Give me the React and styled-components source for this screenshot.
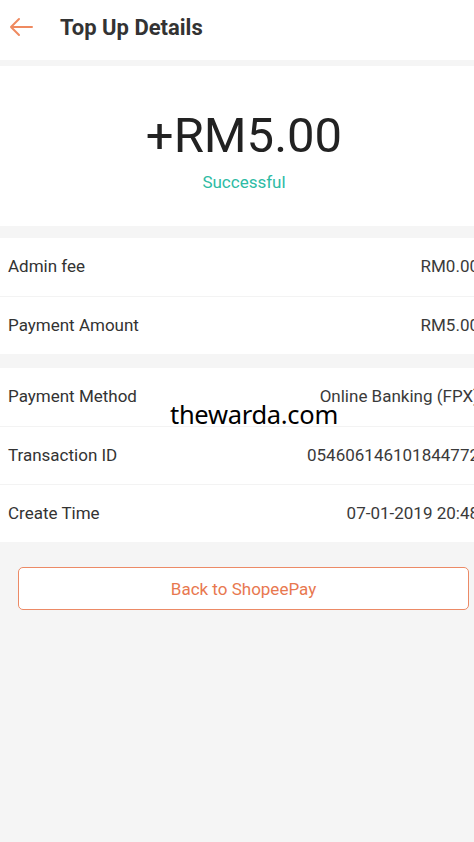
import React from 'react';
import styled, { createGlobalStyle } from 'styled-components';

const GlobalStyle = createGlobalStyle`
  html, body { margin: 0; padding: 0; }
  body { font-family: Roboto, "Liberation Sans", Arial, sans-serif; background: #f5f5f5; }
`;

const Page = styled.div`
  width: 100%;
  min-height: 100vh;
  background: #f5f5f5;
  overflow: hidden;
  position: relative;
  display: flex;
  flex-direction: column;
`;

const Header = styled.div`
  height: 60px;
  background: #fff;
  display: flex;
  align-items: center;
  padding-left: 8px;
  margin-bottom: 6px;
`;

const BackIcon = styled.svg`
  width: 26px;
  height: 20px;
  margin-right: 26px;
  margin-top: -6px;
`;

const Title = styled.div`
  font-size: 22px;
  font-weight: 700;
  color: #333;
  margin-top: -6px;
`;

const AmountCard = styled.div`
  height: 160px;
  background: #fff;
  display: flex;
  flex-direction: column;
  align-items: center;
  padding: 42px 0 0 14px;
  box-sizing: border-box;
  margin-bottom: 12px;
`;

const Amount = styled.div`
  font-size: 49px;
  color: #222;
  line-height: 56px;
`;

const Status = styled.div`
  font-size: 17px;
  color: #2dbba4;
  margin-top: 8px;
`;

const Section = styled.div`
  background: #fff;
  margin-bottom: ${p => p.gap || 0}px;
`;

const Row = styled.div`
  height: 58px;
  display: flex;
  align-items: center;
  justify-content: space-between;
  padding-left: 8px;
  margin-right: -5px;
  border-top: ${p => (p.first ? 'none' : '1px solid #f3f3f3')};
  box-sizing: border-box;
`;

const Label = styled.span`
  font-size: 17px;
  color: #333;
  margin-top: -2px;
`;

const Value = styled.span`
  font-size: 17px;
  color: #3a3a3a;
  white-space: nowrap;
  margin-top: -2px;
`;

const Button = styled.button`
  margin: 25px 5px 0 18px;
  height: 43px;
  border: 1.5px solid #ec8a66;
  border-radius: 5px;
  background: #fff;
  color: #e8784f;
  font-family: Roboto, "Liberation Sans", Arial, sans-serif;
  font-size: 17px;
`;

const Watermark = styled.div`
  position: absolute;
  left: 170px;
  top: 397px;
  font-family: "Noto Sans", "Open Sans", sans-serif;
  font-size: 25.5px;
  color: #000;
  letter-spacing: -0.3px;
`;

const rowsA = [
  ['Admin fee', 'RM0.00'],
  ['Payment Amount', 'RM5.00'],
];

const rowsB = [
  ['Payment Method', 'Online Banking (FPX)'],
  ['Transaction ID', '054606146101844772'],
  ['Create Time', '07-01-2019 20:48'],
];

function App() {
  return (
    <Page>
      <GlobalStyle />
      <Header>
        <BackIcon viewBox="0 0 26 20">
          <path d="M24 10H3M11 2L3 10l8 8" fill="none" stroke="#ef8a60" strokeWidth="2" strokeLinecap="round" strokeLinejoin="round" />
        </BackIcon>
        <Title>Top Up Details</Title>
      </Header>
      <AmountCard>
        <Amount>+RM5.00</Amount>
        <Status>Successful</Status>
      </AmountCard>
      <Section gap={14}>
        {rowsA.map(([l, v], i) => (
          <Row key={l} first={i === 0}>
            <Label>{l}</Label>
            <Value>{v}</Value>
          </Row>
        ))}
      </Section>
      <Section>
        {rowsB.map(([l, v], i) => (
          <Row key={l} first={i === 0}>
            <Label>{l}</Label>
            <Value>{v}</Value>
          </Row>
        ))}
      </Section>
      <Button>Back to ShopeePay</Button>
      <Watermark>thewarda.com</Watermark>
    </Page>
  );
}

export default App;
